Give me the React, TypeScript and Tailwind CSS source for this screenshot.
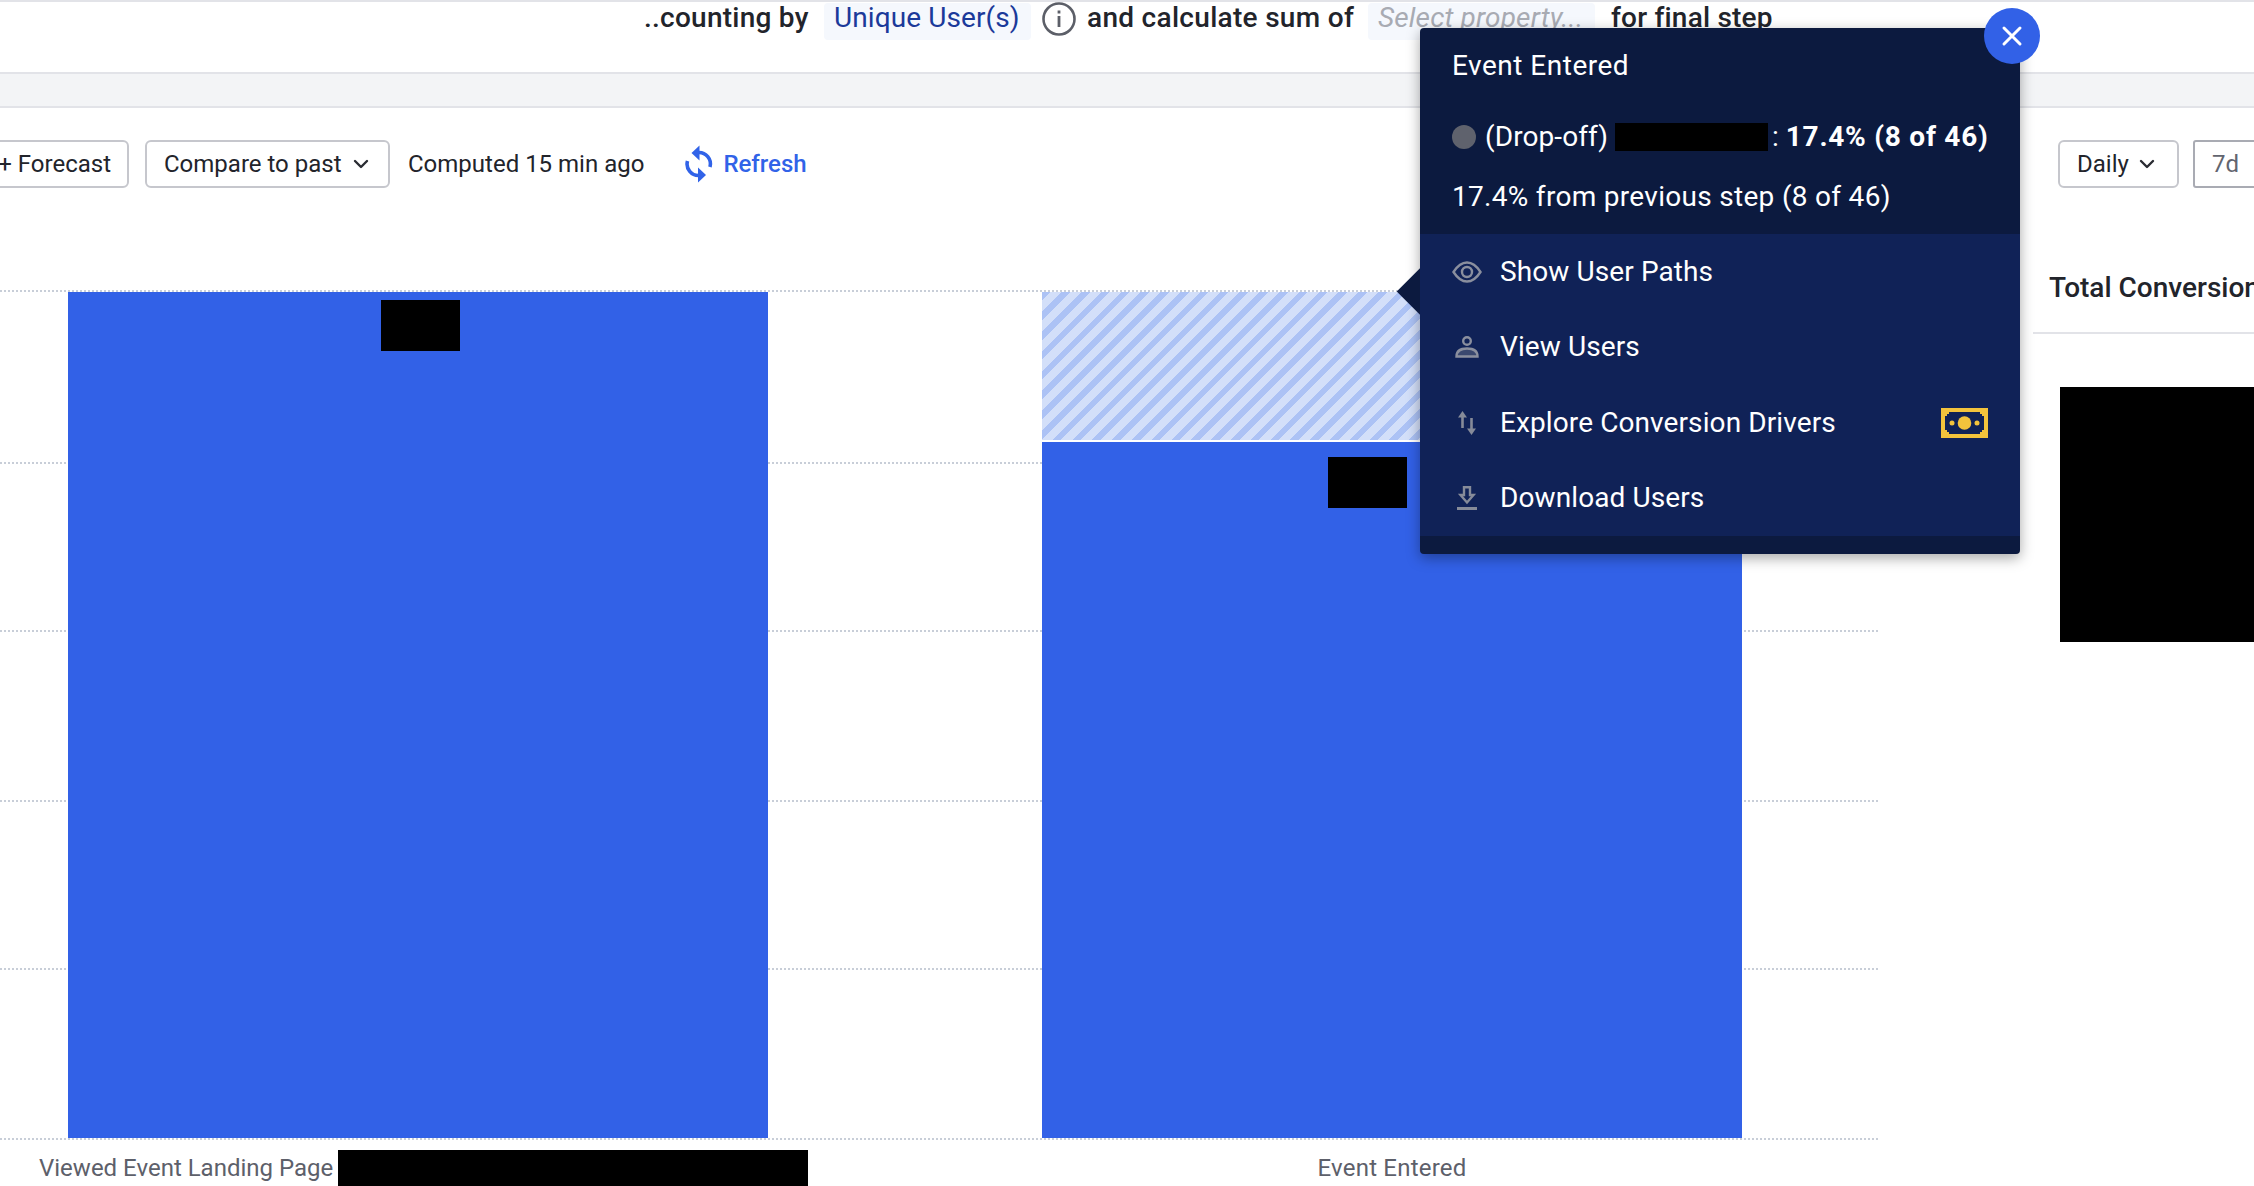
import React from "react";

function Chevron() {
  return (
    <svg width="16" height="10" viewBox="0 0 16 10" fill="none" stroke="#2a2c33" strokeWidth="2.4" strokeLinecap="round" strokeLinejoin="round">
      <polyline points="2,2 8,8 14,2" />
    </svg>
  );
}

function RefreshIcon() {
  return (
    <svg width="30" height="38" viewBox="0 0 30 38" fill="none" stroke="#3163e8" strokeWidth="3.6">
      <path d="M14 7.5 A11.5 11.5 0 0 1 26 22" />
      <path d="M15.5 30.5 A11.5 11.5 0 0 1 3.5 16" />
      <path d="M15.5 0.5 L15.5 15.5 L7.5 8 Z" fill="#3163e8" stroke="none" />
      <path d="M14 22.5 L14 37.5 L22 30 Z" fill="#3163e8" stroke="none" />
    </svg>
  );
}

function InfoIcon() {
  return (
    <svg width="34" height="34" viewBox="0 0 34 34" fill="none">
      <circle cx="17" cy="17" r="15.5" stroke="#5c5f68" strokeWidth="2.6" />
      <rect x="15.6" y="14" width="2.8" height="11" fill="#5c5f68" />
      <rect x="15.6" y="8.5" width="2.8" height="3" fill="#5c5f68" />
    </svg>
  );
}

function EyeIcon() {
  return (
    <svg width="30" height="22" viewBox="0 0 30 22" fill="none" stroke="#8a8f9e" strokeWidth="2.4">
      <path d="M1.5 11 C6 4 10 1.5 15 1.5 C20 1.5 24 4 28.5 11 C24 18 20 20.5 15 20.5 C10 20.5 6 18 1.5 11 Z" />
      <circle cx="15" cy="11" r="5" />
    </svg>
  );
}

function PersonIcon() {
  return (
    <svg width="24" height="22" viewBox="0 0 24 22" fill="none" stroke="#8a8f9e" strokeWidth="2.4">
      <circle cx="12" cy="5" r="3.8" />
      <path d="M1.5 20.5 C1.5 15 6 12.5 12 12.5 C18 12.5 22.5 15 22.5 20.5 Z" fill="#8a8f9e" fillOpacity="0.35" />
    </svg>
  );
}

function SwapIcon() {
  return (
    <svg width="18" height="24" viewBox="0 0 18 24" fill="none">
      <path d="M4.5 17 V5" stroke="#868b99" strokeWidth="2.6" />
      <path d="M4.5 0 L9 6.5 H0 Z" fill="#868b99" />
      <path d="M13.5 7 V19" stroke="#868b99" strokeWidth="2.6" />
      <path d="M13.5 24 L9 17.5 H18 Z" fill="#868b99" />
    </svg>
  );
}

function DownloadIcon() {
  return (
    <svg width="20" height="24" viewBox="0 0 20 24" fill="none" stroke="#868b99" strokeWidth="2.4">
      <path d="M7 1.2 H13 V9 H16.5 L10 16.5 L3.5 9 H7 Z" />
      <path d="M0 22.5 H20" strokeWidth="3" />
    </svg>
  );
}

function MoneyIcon() {
  return (
    <svg width="47" height="30" viewBox="0 0 47 30" shapeRendering="crispEdges">
      <rect width="47" height="30" fill="#f3c33c" />
      <path d="M8 4 H39 V6 H41 V8 H43 V22 H41 V24 H39 V26 H8 V24 H6 V22 H4 V8 H6 V6 H8 Z" fill="#102257" />
      <circle cx="23.5" cy="15" r="6.8" fill="#f3c33c" shapeRendering="auto" />
      <circle cx="11" cy="15" r="2.5" fill="#f3c33c" shapeRendering="auto" />
      <circle cx="36" cy="15" r="2.5" fill="#f3c33c" shapeRendering="auto" />
    </svg>
  );
}

const dots = "h-[2px] w-full bg-[repeating-linear-gradient(90deg,#c8ced8_0,#c8ced8_2px,transparent_2px,transparent_4px)]";

function MenuItem({ icon, label, badge }: { icon: React.ReactNode; label: string; badge?: React.ReactNode }) {
  return (
    <div className="flex h-[75.5px] items-center pl-[32px] pr-[32px]">
      <div className="flex w-[48px] items-center">{icon}</div>
      <span className="flex-1 tracking-[0.1px]">{label}</span>
      {badge}
    </div>
  );
}

export default function App() {
  return (
    <div className="relative h-[1186px] w-[2254px] overflow-hidden bg-white font-['Roboto',sans-serif] text-[#22242b]">
      {/* Query sentence */}
      <div className="flex h-[72px] items-start border-t-2 border-[#e2e3e8] pl-[644px] pt-[1px] text-[28px] leading-[29px]">
        <span className="w-[180px] shrink-0 font-medium tracking-[0.25px]">..counting by</span>
        <span className="h-[37px] w-[207px] shrink-0 rounded-[4px] bg-[#f5f8fd] pl-[10px] tracking-[0.1px] text-[#1b3a9a]">Unique User(s)</span>
        <span className="ml-[11px] mr-[11px] mt-[-1px] shrink-0">
          <InfoIcon />
        </span>
        <span className="w-[281px] shrink-0 font-medium tracking-[0.3px]">and calculate sum of</span>
        <span className="h-[37px] w-[227px] shrink-0 rounded-[4px] bg-[#f5f8fd] pl-[10px] italic tracking-[0.15px] text-[#a8abb3]">Select property...</span>
        <span className="ml-[16px] font-medium tracking-[0.2px]">for final step</span>
      </div>

      {/* Grey band */}
      <div className="h-[36px] border-y-2 border-[#e2e3e8] bg-[#f3f4f6]" />

      {/* Toolbar */}
      <div className="flex h-[136px] items-start justify-between pt-[32px] text-[24px]">
        <div className="flex items-center">
          <div className="ml-[-12px] flex h-[48px] w-[141px] items-center justify-end rounded-[6px] border-2 border-[#c6c7cd] pr-[16px] whitespace-nowrap">+ Forecast</div>
          <div className="ml-[16px] flex h-[48px] w-[245px] items-center gap-[11px] rounded-[6px] border-2 border-[#c6c7cd] pl-[17px]">
            Compare to past
            <Chevron />
          </div>
          <span className="ml-[18px]">Computed 15 min ago</span>
          <span className="ml-[40px] flex items-center gap-[9px] font-medium text-[#3163e8]">
            <RefreshIcon />
            Refresh
          </span>
        </div>
        <div className="mr-[-19px] flex items-center">
          <div className="flex h-[48px] w-[121px] items-center gap-[10px] rounded-[6px] border-2 border-[#c6c7cd] pl-[17px]">
            Daily
            <Chevron />
          </div>
          <div className="ml-[14px] flex h-[48px] w-[80px] items-center rounded-[3px] border-2 border-[#a9abb3] pl-[17px] text-[#62656f]">7d</div>
        </div>
      </div>

      {/* Chart + side panel */}
      <div className="flex">
        <div className="w-[1878px] shrink-0 pt-[46px]">
          <div className="relative h-[851px]">
            <div className="absolute inset-0 flex flex-col">
              <div className={dots} />
              <div className={`${dots} mt-[170px]`} />
              <div className={`${dots} mt-[166px]`} />
              <div className={`${dots} mt-[168px]`} />
              <div className={`${dots} mt-[166px]`} />
              <div className={`${dots} mt-[168px]`} />
            </div>
            <div className="relative flex h-[848px] gap-[274px] pl-[68px] pt-[2px]">
              <div className="flex w-[700px] shrink-0 justify-center bg-[#3261e7] pl-[5px] pt-[8px]">
                <div className="h-[51px] w-[79px] bg-black" />
              </div>
              <div className="flex w-[700px] shrink-0 flex-col">
                <div className="h-[148px] bg-[repeating-linear-gradient(135deg,#acc2f5_0,#acc2f5_6px,#d3dff9_6px,#d3dff9_14px)]" />
                <div className="mt-[2px] flex flex-1 justify-center bg-[#3261e7] pr-[50px] pt-[15px]">
                  <div className="h-[51px] w-[79px] bg-black" />
                </div>
              </div>
            </div>
          </div>
          <div className="flex pl-[39px] pt-[9px] text-[24px] text-[#5d606a]">
            <div className="flex w-[1003px] shrink-0 items-center whitespace-nowrap">
              <span>Viewed Event Landing Page</span>
              <div className="ml-[5px] h-[36px] w-[470px] shrink-0 bg-black" />
            </div>
            <div className="flex h-[36px] w-[700px] shrink-0 items-center justify-center tracking-[0.2px]">Event Entered</div>
          </div>
        </div>
        <div className="ml-[155px] w-[300px] shrink-0">
          <div className="h-[90px] border-b-2 border-[#e2e3e8] pl-[16px] pt-[24px] text-[28px] font-medium leading-[40px] whitespace-nowrap">Total Conversion</div>
          <div className="ml-[27px] mt-[53px] h-[255px] w-[300px] bg-black" />
        </div>
      </div>

      {/* Tooltip */}
      <div className="absolute left-[1420px] top-[28px] w-[600px] rounded-[4px] bg-[#0c1a3f] text-[28px] text-white shadow-[0_4px_14px_rgba(0,0,0,0.35)]">
        <div className="absolute left-[-16.5px] top-[245.5px] h-[35px] w-[35px] rotate-45 bg-[#0c1a3f]" />
        <div className="relative flex h-[206px] flex-col pl-[32px] pr-[32px]">
          <div className="mt-[18px] h-[40px] leading-[40px] tracking-[0.5px]">Event Entered</div>
          <div className="mt-[31px] flex h-[40px] items-center whitespace-nowrap">
            <span className="mr-[9px] h-[24px] w-[24px] shrink-0 rounded-full bg-[#5f626d]" />
            <span className="shrink-0 tracking-[0.1px]">(Drop-off)</span>
            <span className="ml-[7px] h-[28px] w-[153px] shrink-0 bg-black" />
            <span className="ml-[4px] shrink-0">
              : <strong className="font-bold tracking-[0.75px]">17.4% (8 of 46)</strong>
            </span>
          </div>
          <div className="mt-[20px] h-[40px] leading-[40px] tracking-[0.3px] whitespace-nowrap">17.4% from previous step (8 of 46)</div>
        </div>
        <div className="relative bg-[#102257]">
          <MenuItem icon={<EyeIcon />} label="Show User Paths" />
          <MenuItem icon={<span className="pl-[3px]"><PersonIcon /></span>} label="View Users" />
          <MenuItem icon={<span className="pl-[6px]"><SwapIcon /></span>} label="Explore Conversion Drivers" badge={<MoneyIcon />} />
          <MenuItem icon={<span className="pl-[5px]"><DownloadIcon /></span>} label="Download Users" />
        </div>
        <div className="h-[18px]" />
        <div className="absolute right-[-20px] top-[-20px] flex h-[56px] w-[56px] items-center justify-center rounded-full bg-[#3261e7]">
          <svg width="22" height="22" viewBox="0 0 22 22" stroke="#fff" strokeWidth="3" strokeLinecap="round">
            <path d="M3 3 L19 19 M19 3 L3 19" />
          </svg>
        </div>
      </div>
    </div>
  );
}
